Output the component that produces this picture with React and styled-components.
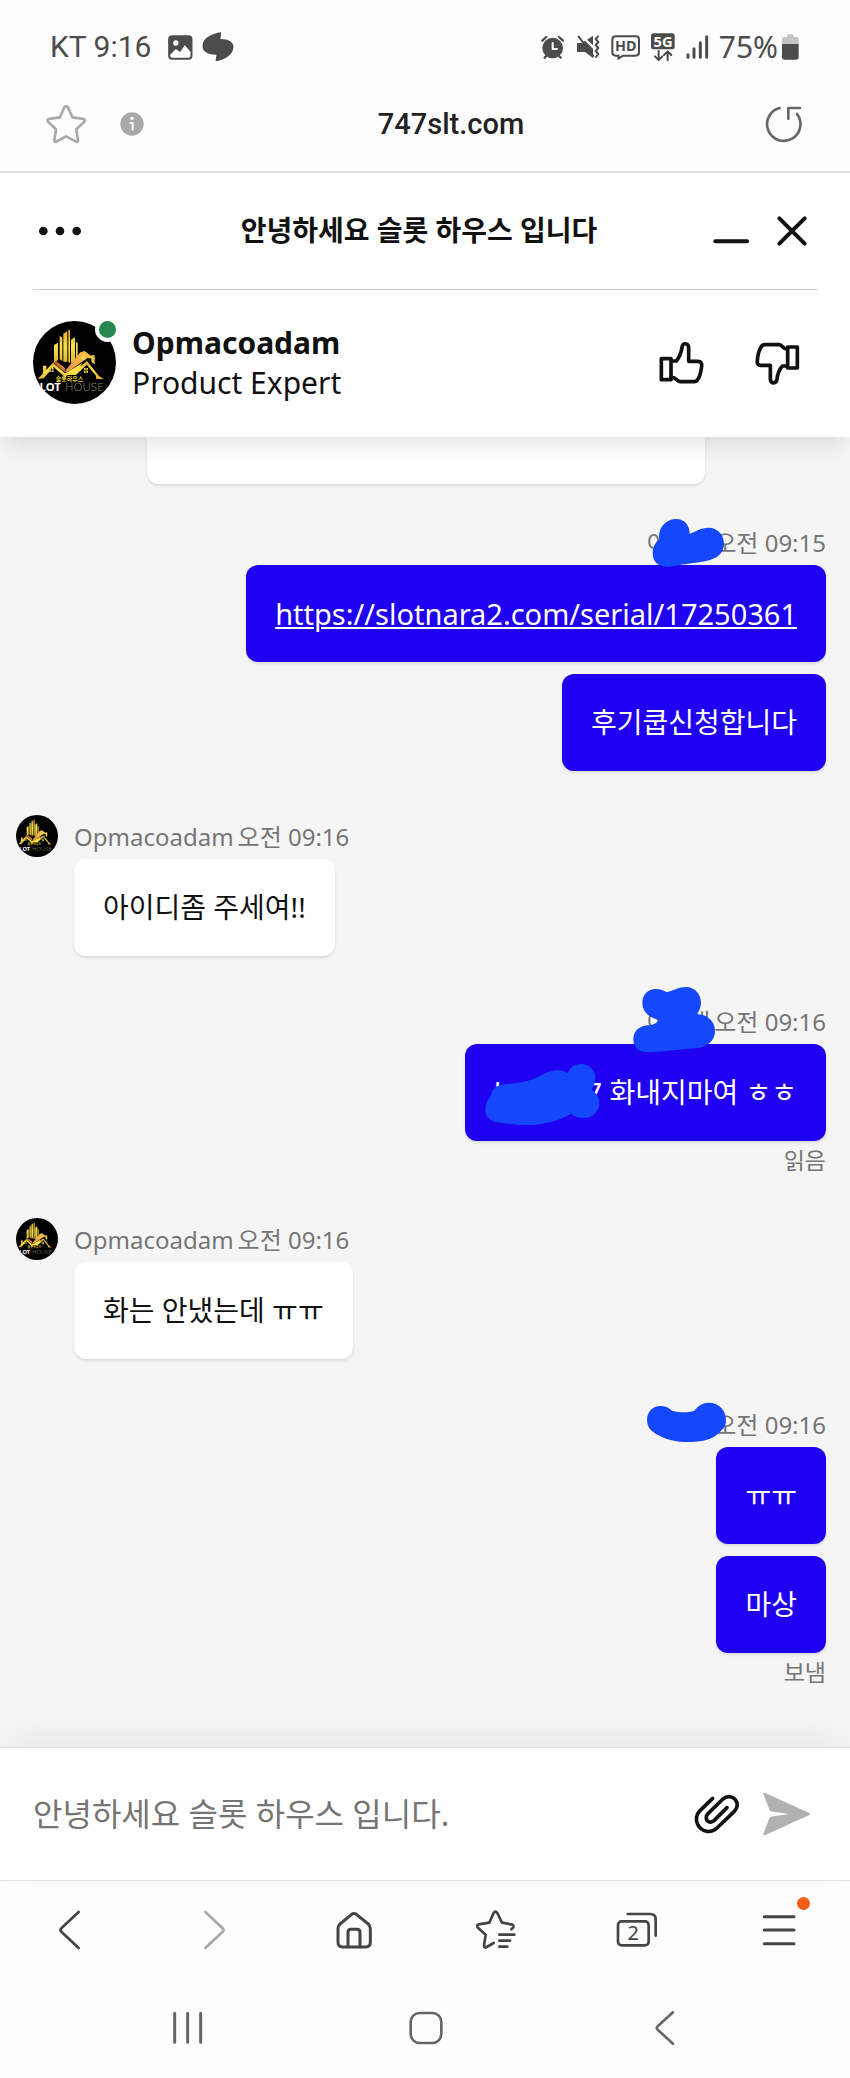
import React from 'react';
import styled, { createGlobalStyle } from 'styled-components';

const GlobalStyle = createGlobalStyle`
    * {
        box-sizing: border-box;
    }

    body {
        margin: 0;
        background: #fdfdfd;
        color: #111;
        font-family: 'Noto Sans', 'Noto Sans CJK KR', sans-serif;
    }
`;

const Page = styled.div`
    display: flex;
    flex-direction: column;
    min-height: 100vh;
`;

const IconButton = styled.button`
    display: flex;
    align-items: center;
    justify-content: center;
    position: relative;
    padding: 0;
    border: 0;
    background: none;
    color: inherit;
    cursor: pointer;
`;

const Svg = styled.svg`
    display: block;
    flex-shrink: 0;
    overflow: visible;
    fill: none;
    stroke: currentColor;
    stroke-linecap: round;
    stroke-linejoin: round;
`;

/* ---- phone status bar ---- */

const StatusBar = styled.div`
    display: flex;
    align-items: center;
    justify-content: space-between;
    height: 94px;
    padding: 0 51px 0 50px;
    color: #4c4c4c;
`;

const StatusGroup = styled.div`
    display: flex;
    align-items: center;
    gap: ${({ $gap }) => $gap}px;
`;

const Clock = styled.span`
    margin-right: 8px;
    font-family: Roboto, sans-serif;
    font-size: 30px;
    line-height: 36px;
`;

const Battery = styled.div`
    display: flex;
    align-items: center;
    gap: 4px;
    font-size: 30px;
    line-height: 36px;
`;

/* ---- address bar ---- */

const AddressBar = styled.div`
    display: flex;
    align-items: center;
    height: 79px;
    padding: 0 48px 18px 46px;
    border-bottom: 2px solid #e5e5e5;
    color: #a9a9a9;
`;

const InfoButton = styled(IconButton)`
    margin-left: 34px;
`;

const ReloadButton = styled(IconButton)`
    padding-left: 8px;
    color: #666;
`;

const Address = styled.div`
    flex: 1;
    color: #222;
    font-family: Roboto, sans-serif;
    font-size: 29px;
    font-weight: 500;
    line-height: 36px;
    text-align: center;
`;

/* ---- chat header ---- */

const ChatHeader = styled.header`
    position: relative;
    z-index: 1;
    padding: 0 32px 0 33px;
    background: #fff;
    box-shadow: 0 12px 20px -6px rgba(0, 0, 0, 0.12);
`;

const TitleRow = styled.div`
    display: grid;
    grid-template-columns: 92px 1fr 105px;
    align-items: center;
    height: 117px;
    border-bottom: 1px solid #ccc;
`;

const MenuButton = styled(IconButton)`
    justify-self: start;
`;

const Title = styled.h1`
    margin: 0;
    padding-bottom: 2px;
    font-size: 28px;
    font-weight: 700;
    line-height: 40px;
    text-align: center;
`;

const WindowButtons = styled.div`
    display: flex;
    gap: 28px;
`;

const AgentRow = styled.div`
    display: flex;
    align-items: center;
    gap: 16px;
    height: 147px;
    padding: 0 19px 2px 0;
`;

const AvatarWrap = styled.div`
    position: relative;
`;

const OnlineDot = styled.span`
    position: absolute;
    top: -4px;
    right: -4px;
    width: 25px;
    height: 25px;
    border: 4px solid #fff;
    border-radius: 50%;
    background: #268750;
`;

const AgentInfo = styled.div`
    flex: 1;
    font-size: 30px;
    line-height: 40px;
`;

const AgentName = styled.div`
    font-weight: 700;
`;

const RateButtons = styled.div`
    display: flex;
    gap: 52px;
`;

/* ---- messages ---- */

const Messages = styled.main`
    display: flex;
    flex: 1;
    flex-direction: column;
    padding: 0 24px 17px 16px;
    background: #f5f5f5;
`;

const HistoryCard = styled.div`
    height: 47px;
    margin: 0 121px 37px 131px;
    border-radius: 0 0 12px 12px;
    background: #fff;
    box-shadow: 0 2px 3px rgba(0, 0, 0, 0.1);
`;

const Group = styled.section`
    display: flex;
    gap: 16px;
    justify-content: ${({ $own }) => ($own ? 'flex-end' : 'flex-start')};
    margin-bottom: 44px;
`;

const GroupBody = styled.div`
    display: flex;
    flex-direction: column;
    align-items: ${({ $own }) => ($own ? 'flex-end' : 'flex-start')};
    position: relative;
`;

const Meta = styled.div`
    display: flex;
    gap: 4px;
    color: #757575;
    font-size: 24px;
    line-height: 44px;
`;

const HiddenName = styled.span`
    display: flex;
    justify-content: space-between;
    width: 64px;
`;

const Bubble = styled.div`
    position: relative;
    padding: 28px 29px;
    border-radius: 12px;
    background: ${({ $own }) => ($own ? '#2000f0' : '#fff')};
    box-shadow: 0 2px 3px rgba(0, 0, 0, 0.1);
    color: ${({ $own }) => ($own ? '#fff' : '#111')};
    font-size: 28px;
    line-height: 41px;

    & + & {
        margin-top: 12px;
    }
`;

const BubbleLink = styled.a`
    display: block;
    color: inherit;
    font-size: 29px;
    text-decoration: underline;
    text-decoration-thickness: 2px;
    text-underline-offset: 2px;
`;

const HiddenId = styled.span`
    display: inline-block;
    width: 92px;
`;

const Delivery = styled.div`
    padding-top: 6px;
    color: #757575;
    font-size: 23px;
    line-height: 27px;
`;

const Scribble = styled.svg`
    position: absolute;
    z-index: 1;
    top: ${({ $top }) => $top}px;
    right: ${({ $right }) => $right}px;
    fill: #1548fc;
`;

/* ---- composer ---- */

const Composer = styled.form`
    display: flex;
    align-items: center;
    gap: 22px;
    position: relative;
    height: 134px;
    padding: 0 40px 0 33px;
    border-top: 1px solid #e0e0e0;
    border-bottom: 1px solid #e2e2e2;
    background: #fff;
    box-shadow: 0 -16px 40px -6px rgba(0, 0, 0, 0.06);
`;

const MessageInput = styled.input`
    flex: 1;
    min-width: 0;
    padding: 0;
    border: 0;
    outline: 0;
    background: none;
    color: #111;
    font-family: inherit;
    font-size: 32px;
    line-height: 48px;

    &::placeholder {
        color: #757575;
        opacity: 1;
    }
`;

/* ---- bottom bars ---- */

const BrowserNav = styled.nav`
    display: grid;
    grid-template-columns: repeat(6, 1fr);
    place-items: center;
    height: 98px;
    color: #444;
`;

const NavButton = styled(IconButton)`
    width: 48px;
    height: 48px;
    color: ${({ $dim }) => ($dim ? '#a8a8a8' : 'inherit')};
`;

const Badge = styled.span`
    position: absolute;
    top: -9px;
    right: -7px;
    width: 13px;
    height: 13px;
    border-radius: 50%;
    background: #ef5f17;
`;

const SystemNav = styled.nav`
    display: grid;
    grid-template-columns: repeat(3, 1fr);
    place-items: center;
    height: 99px;
    padding: 0 66px 2px 68px;
    color: #666;
`;

const Logo = ({ size }) => {
    const id = React.useId();
    return (
        <svg width={size} height={size} viewBox="0 0 249 249" role="img" aria-label="SLOT HOUSE" display="block">
            <defs>
                <linearGradient id={`${id}gold`} x1="0" y1="0" x2="0" y2="1">
                    <stop offset="0" stopColor="#d8a52c" />
                    <stop offset="0.5" stopColor="#f8e04a" />
                    <stop offset="1" stopColor="#e0b52e" />
                </linearGradient>
                <linearGradient id={`${id}roof`} x1="0" y1="0" x2="1" y2="0">
                    <stop offset="0" stopColor="#b85b1c" />
                    <stop offset="0.5" stopColor="#f5a84a" />
                    <stop offset="1" stopColor="#f5d53c" />
                </linearGradient>
                <clipPath id={`${id}clip`}>
                    <circle cx="124.5" cy="124.5" r="124.5" />
                </clipPath>
            </defs>
            <g clipPath={`url(#${id}clip)`}>
                <rect width="249" height="249" fill="#000" />
                <g fill={`url(#${id}gold)`}>
                    <path d="M63 72l12-7v52l-12 8zM80 44l8 6v70l-8-5zM91 38l12-8v92l-12 0zM106 25l5 3v98l-5-3zM114 56l12-8v76l-12 2zM129 62l5 4v45l-5 4z" />
                    <path d="M30 134h10v20l-10 8zM175 102h10v28l-10-8z" />
                </g>
                <path d="M60 124l8-5 28 22-1 12zM94 152l48-58 12-4 34 25-24-4-40 28-20 15z" fill={`url(#${id}roof)`} />
                <path d="M14 174l46-49 35 31 26-4 41-32 35 44 16 11-24-2v-9l-28-33-32 31h-25l-8 7-34-31-30 34z" fill={`url(#${id}gold)`} />
                <path d="M96 158l18-12 34-20-20 32z" fill="#f8e04a" />
                <path d="M50 141h12v12H50zM153 141h12v14h-12zM146 106h10v10h-10z" fill="#e8d95a" />
                <path d="M56 141v12M50 147h12M159 141v14M153 148h12" stroke="#000" strokeWidth="2" />
                <text x="68" y="180" fill="#e8d23c" fontFamily="Noto Sans CJK KR" fontWeight="700" fontSize="18">
                    슬롯하우스
                </text>
                <text x="1" y="211" fill="#fff" fontFamily="Noto Sans" fontWeight="700" fontSize="34">
                    SLOT
                </text>
                <text x="96" y="211" fill="#87805f" fontFamily="Noto Sans" fontWeight="300" fontSize="35">
                    HOUSE
                </text>
            </g>
        </svg>
    );
};

const StatusIcons = () => (
    <>
        <Svg width="24" height="24" viewBox="353 104 72 72" role="img" aria-label="Alarm">
            <circle cx="388" cy="143" r="31" fill="currentColor" stroke="none" />
            <path d="M357 121l12-11M419 121l-12-11M364 172l8-8M412 172l-8-8" strokeWidth="7" />
            <path d="M388 128v18h13" stroke="#fff" strokeWidth="6" />
        </Svg>
        <Svg width="24" height="24" viewBox="459 104 72 72" role="img" aria-label="Vibrate">
            <path d="M462 128h14l10-7 24 24v28l-24-18h-24zM492 118l18-12v29z" fill="currentColor" stroke="none" />
            <path d="M467 109l44 58" strokeWidth="6" />
            <path d="M525 108l-7 8 8 9-8 9 8 9-8 9 8 9-7 9" strokeWidth="6" />
        </Svg>
        <Svg width="29" height="25" viewBox="565 104 87 75" role="img" aria-label="HD voice">
            <path d="M579 108h60q10 0 10 10v38q0 10-10 10h-38l-14 9 1-9h-9q-10 0-10-10v-38q0-10 10-10z" strokeWidth="6" />
            <text x="609" y="153" textAnchor="middle" fill="currentColor" stroke="none" fontFamily="Noto Sans" fontWeight="700" fontSize="43">
                HD
            </text>
        </Svg>
        <Svg width="24" height="28" viewBox="675 95 72 84" role="img" aria-label="5G">
            <rect x="675" y="96" width="71" height="48" rx="8" fill="currentColor" stroke="none" />
            <text x="711" y="136" textAnchor="middle" fill="#fff" stroke="none" fontFamily="Noto Sans" fontWeight="700" fontSize="44">
                5G
            </text>
            <path d="M698 149v26M687 165l11 11 11-11M725 177v-26M714 161l11-11 11 11" strokeWidth="6" />
        </Svg>
        <Svg width="22" height="24" viewBox="776 104 66 72" role="img" aria-label="Signal">
            <path d="M782 163v8M800 145v26M819 127v44M838 109v62" strokeWidth="9" />
        </Svg>
    </>
);

const Nav = () => (
    <>
        <BrowserNav aria-label="Browser">
            <NavButton aria-label="Back">
                <Svg width="24" height="40" viewBox="176 539 72 120" strokeWidth="8">
                    <path d="M235 545l-52 49q-5 5 0 10l52 49" />
                </Svg>
            </NavButton>
            <NavButton aria-label="Forward" $dim>
                <Svg width="24" height="40" viewBox="602 539 72 120" strokeWidth="8">
                    <path d="M618 545l52 49q5 5 0 10l-52 49" />
                </Svg>
            </NavButton>
            <NavButton aria-label="Home">
                <Svg width="38" height="38" viewBox="1007 541 114 114" strokeWidth="9">
                    <path d="M1057 551q7-5 14 0l36 29q6 5 6 14v41q0 14-14 14h-69q-14 0-14-14v-41q0-9 6-14z" />
                    <path d="M1046 648v-43q0-9 9-9h18q9 0 9 9v43" />
                </Svg>
            </NavButton>
            <NavButton aria-label="Bookmarks">
                <Svg width="42" height="42" viewBox="151 537 126 126" strokeWidth="8">
                    <path d="M260 598l5-5q4-5-2-9l-31-6-14-29q-6-8-11 0l-13 29-32 5q-8 3-2 10l23 21-5 34q1 7 8 3l21-12" />
                    <path d="M224 614h45M224 632h32M224 650h24" />
                </Svg>
            </NavButton>
            <NavButton aria-label="Tabs">
                <Svg width="42" height="38" viewBox="575 542 126 114" strokeWidth="8">
                    <rect x="581" y="573" width="92" height="72" rx="11" />
                    <path d="M610 551h68q16 0 16 16v49" />
                    <text x="627" y="630" textAnchor="middle" fill="currentColor" stroke="none" fontFamily="Noto Sans" fontSize="60">
                        2
                    </text>
                </Svg>
            </NavButton>
            <NavButton aria-label="Menu">
                <Svg width="34" height="34" viewBox="1010 545 102 102" strokeWidth="9">
                    <path d="M1017 556h89M1017 596h89M1017 637h89" />
                </Svg>
                <Badge />
            </NavButton>
        </BrowserNav>
        <SystemNav aria-label="System">
            <NavButton aria-label="Recent apps">
                <Svg width="32" height="34" viewBox="516 842 96 102" strokeWidth="9">
                    <path d="M527 849v87M566 849v87M605 849v87" />
                </Svg>
            </NavButton>
            <NavButton aria-label="Home screen">
                <Svg width="34" height="34" viewBox="0 0 102 102" strokeWidth="8">
                    <rect x="5" y="6" width="92" height="90" rx="27" />
                </Svg>
            </NavButton>
            <NavButton aria-label="Back">
                <Svg width="20" height="36" viewBox="691 839 60 108" strokeWidth="8">
                    <path d="M745 846l-46 42q-5 5 0 10l46 42" />
                </Svg>
            </NavButton>
        </SystemNav>
    </>
);

const AgentMessage = ({ time, children }) => (
    <Group>
        <Logo size={42} />
        <GroupBody>
            <Meta>
                <span>Opmacoadam</span>
                <time>{time}</time>
            </Meta>
            <Bubble>{children}</Bubble>
        </GroupBody>
    </Group>
);

const OwnMessages = ({ time, status, scribble, children }) => (
    <Group $own>
        <GroupBody $own>
            <Meta>
                <HiddenName>
                    <span>이</span>
                    <span>래</span>
                </HiddenName>
                <time>{time}</time>
            </Meta>
            {scribble}
            {children}
            {status && <Delivery>{status}</Delivery>}
        </GroupBody>
    </Group>
);

const App = () => (
    <>
        <GlobalStyle />
        <Page>
            <StatusBar>
                <StatusGroup $gap={9}>
                    <Clock>KT 9:16</Clock>
                    <Svg width="25" height="25" viewBox="503 105 74 75" role="img" aria-label="Picture">
                        <rect x="506" y="109" width="67" height="67" rx="9" fill="currentColor" strokeWidth="6" />
                        <path d="M509 164l17-17 13 9 14-20 17 19v12q0 6-6 6h-49q-6 0-6-6z" fill="#fff" stroke="none" />
                        <circle cx="526" cy="129" r="8" fill="#fff" stroke="none" />
                    </Svg>
                    <Svg width="32" height="30" viewBox="603 98 95 90" role="img" aria-label="Message">
                        <path d="M660 99l-2 20c25 0 39 9 39 24 0 24-29 40-54 43l3-20c-27 1-42-9-42-26 0-24 29-38 56-41z" fill="currentColor" stroke="none" />
                    </Svg>
                </StatusGroup>
                <StatusGroup $gap={11}>
                    <StatusIcons />
                    <Battery>
                        75%
                        <Svg width="17" height="26" viewBox="1071 101 51 78" role="img" aria-label="Battery">
                            <path d="M1071 132v-15q0-7 7-7h8v-3q0-5 5-5h10q5 0 5 5v3h8q7 0 7 7v15z" fill="#c4c4c4" stroke="none" />
                            <path d="M1071 131h50v39q0 8-8 8h-34q-8 0-8-8z" fill="currentColor" stroke="none" />
                        </Svg>
                    </Battery>
                </StatusGroup>
            </StatusBar>

            <AddressBar>
                <IconButton aria-label="Bookmark this page">
                    <Svg width="40" height="40" viewBox="139 312 120 120" strokeWidth="8">
                        <path d="M194 322q5-7 11 0l13 30 34 5q6 3 2 8l-24 23 5 33q0 6-6 4l-30-16-29 16q-6 2-6-4l5-33-24-23q-4-5 2-8l34-5z" />
                    </Svg>
                </IconButton>
                <InfoButton aria-label="Site information">
                    <Svg width="24" height="24" viewBox="362 336 72 72">
                        <circle cx="398" cy="372" r="35" fill="currentColor" stroke="none" />
                        <path d="M391 369h9v22" stroke="#fff" strokeWidth="6" strokeLinecap="butt" />
                        <circle cx="398" cy="355" r="5" fill="#fff" stroke="none" />
                    </Svg>
                </InfoButton>
                <Address>747slt.com</Address>
                <ReloadButton aria-label="Reload">
                    <Svg width="36" height="38" viewBox="1023 314 108 114" strokeWidth="8">
                        <path d="M1064 323a50 50 0 1 0 52 18M1090 355v-32h35" />
                    </Svg>
                </ReloadButton>
            </AddressBar>

            <ChatHeader>
                <TitleRow>
                    <MenuButton aria-label="More options">
                        <Svg width="54" height="36" viewBox="99 130 162 108">
                            <g fill="currentColor" stroke="none">
                                <circle cx="130" cy="184" r="13" />
                                <circle cx="180" cy="184" r="13" />
                                <circle cx="230" cy="184" r="13" />
                            </g>
                        </Svg>
                    </MenuButton>
                    <Title>안녕하세요 슬롯 하우스 입니다</Title>
                    <WindowButtons>
                        <IconButton aria-label="Minimize">
                            <Svg width="36" height="32" viewBox="863 136 108 96" strokeWidth="12">
                                <path d="M870 215h95" />
                            </Svg>
                        </IconButton>
                        <IconButton aria-label="Close">
                            <Svg width="30" height="32" viewBox="1055 136 90 96" strokeWidth="12">
                                <path d="M1062 146l76 76M1138 146l-76 76" />
                            </Svg>
                        </IconButton>
                    </WindowButtons>
                </TitleRow>
                <AgentRow>
                    <AvatarWrap>
                        <Logo size={83} />
                        <OnlineDot />
                    </AvatarWrap>
                    <AgentInfo>
                        <AgentName>Opmacoadam</AgentName>
                        <div>Product Expert</div>
                    </AgentInfo>
                    <RateButtons>
                        <IconButton aria-label="Rate as good">
                            <Svg width="44" height="44" viewBox="702 513 132 132" strokeWidth="11">
                                <path d="M709 566h29v63h-29z" />
                                <path d="M740 573h14c11-13 14-23 17-40 1-16 20-15 20 0v41h29c8 0 11 6 10 14-2 18-6 33-12 41-2 4-5 6-11 6h-41c-10 0-13-14-26-13" />
                            </Svg>
                        </IconButton>
                        <IconButton aria-label="Rate as bad">
                            <Svg width="44" height="44" viewBox="988 516 132 132" strokeWidth="11">
                                <path d="M1086 534h29v63h-29z" />
                                <path d="M1084 591h-14c-11 13-14 22-16 39-2 16-20 15-20-1v-40h-30c-7 0-10-6-9-13 1-18 5-31 10-40 3-6 6-9 12-9h43c11 0 11 14 24 13" />
                            </Svg>
                        </IconButton>
                    </RateButtons>
                </AgentRow>
            </ChatHeader>

            <Messages>
                <HistoryCard />

                <OwnMessages
                    time="오전 09:15"
                    scribble={
                        <Scribble $top={-3} $right={99} width="77" height="50" viewBox="675 54 231 150">
                            <path d="M683 160C683 143 690 128 703 118C698 85 722 57 753 57C780 57 795 78 794 101C812 95 828 83 850 83C878 83 897 104 897 132C897 155 882 172 855 180C825 188 790 190 735 200C703 203 683 188 683 160Z" />
                        </Scribble>
                    }
                >
                    <Bubble $own>
                        <BubbleLink href="https://slotnara2.com/serial/17250361">
                            https://slotnara2.com/serial/17250361
                        </BubbleLink>
                    </Bubble>
                    <Bubble $own>후기쿱신청합니다</Bubble>
                </OwnMessages>

                <AgentMessage time="오전 09:16">아이디좀 주세여!!</AgentMessage>

                <OwnMessages
                    time="오전 09:16"
                    status="읽음"
                    scribble={
                        <Scribble $top={-14} $right={110} width="84" height="67" viewBox="621 78 252 201">
                            <path d="M625 238C625 212 645 197 672 196C685 194 695 190 701 180C672 172 652 155 652 128C652 103 670 87 692 87C707 87 716 92 725 97C745 92 762 81 782 81C808 81 828 101 828 128C828 142 822 154 815 163C848 163 870 184 870 214C870 238 852 258 825 263C780 266 740 272 670 277C643 278 625 262 625 238Z" />
                        </Scribble>
                    }
                >
                    <Bubble $own>
                        <HiddenId>h</HiddenId>7 화내지마여 ㅎㅎ
                        <Scribble $top={19} $right={226} width="115" height="63" viewBox="180 309 345 189">
                            <path d="M181 450C181 432 187 420 196 410C200 390 212 376 235 373C290 370 325 360 350 345C375 332 400 322 428 340C435 322 450 312 468 312C494 312 511 332 511 354C511 370 505 380 500 390C515 400 523 412 523 428C523 455 503 474 475 474C460 474 448 470 438 462C400 482 370 490 335 494C295 497 255 492 225 488C198 486 181 472 181 450Z" />
                        </Scribble>
                    </Bubble>
                </OwnMessages>

                <AgentMessage time="오전 09:16">화는 안냈는데 ㅠㅠ</AgentMessage>

                <OwnMessages
                    time="오전 09:16"
                    status="보냄"
                    scribble={
                        <Scribble $top={-1} $right={99} width="81" height="41" viewBox="663 66 243 123">
                            <path d="M666 120C666 95 684 78 706 78C722 78 732 84 741 92C765 98 788 98 808 92C820 76 834 68 851 68C882 68 903 90 903 122C903 133 899 143 890 150C875 168 858 178 835 182C790 190 740 187 705 168C683 158 666 143 666 120Z" />
                        </Scribble>
                    }
                >
                    <Bubble $own>ㅠㅠ</Bubble>
                    <Bubble $own>마상</Bubble>
                </OwnMessages>
            </Messages>

            <Composer onSubmit={(e) => e.preventDefault()}>
                <MessageInput aria-label="Message" placeholder="안녕하세요 슬롯 하우스 입니다." />
                <IconButton type="button" aria-label="Attach a file">
                    <Svg width="46" height="42" viewBox="806 192 138 126" strokeWidth="11">
                        <path d="M862 208l-38 37c-11 11-14 28-7 41 11 24 40 28 58 11l52-50c10-10 12-25 3-35-10-12-27-11-37-2l-45 44c-8 8-6 18-1 22 5 5 13 4 19-1l39-39" />
                    </Svg>
                </IconButton>
                <IconButton type="submit" aria-label="Send">
                    <Svg width="48" height="44" viewBox="1011 187 144 132">
                        <path d="M1018 192l134 61-134 61 19-50 75-11-75-11z" fill="#b1b1b1" stroke="#b1b1b1" strokeWidth="6" />
                    </Svg>
                </IconButton>
            </Composer>

            <Nav />
        </Page>
    </>
);

export default App;
